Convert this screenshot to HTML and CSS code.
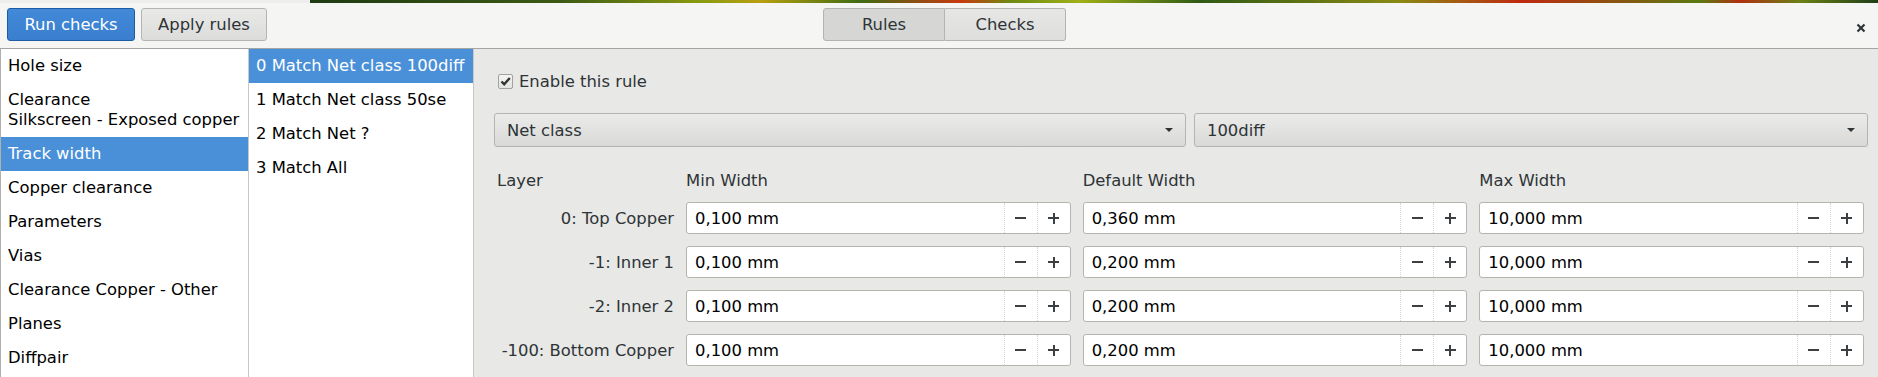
FILE: index.html
```html
<!DOCTYPE html>
<html lang="en">
<head>
    <meta charset="UTF-8">
    <title>Design rules</title>
    <link rel="stylesheet" href="styles.css">
</head>
<body>
    <div class="backdrop"></div>

    <header class="toolbar">
        <div class="toolbar-left">
            <button class="btn btn-primary">Run checks</button>
            <button class="btn btn-apply">Apply rules</button>
        </div>
        <div class="switcher">
            <button class="tab active">Rules</button>
            <button class="tab">Checks</button>
        </div>
        <button class="close" aria-label="Close">
            <svg width="10" height="10" viewBox="0 0 10 10"><path d="M1.5 1.5 L8.5 8.5 M8.5 1.5 L1.5 8.5" stroke="#2e3436" stroke-width="2.2" fill="none"/></svg>
        </button>
    </header>

    <main class="editor">
        <ul class="list categories">
            <li>Hole size</li>
            <li>Clearance<br>Silkscreen - Exposed copper</li>
            <li class="selected">Track width</li>
            <li>Copper clearance</li>
            <li>Parameters</li>
            <li>Vias</li>
            <li>Clearance Copper - Other</li>
            <li>Planes</li>
            <li>Diffpair</li>
        </ul>

        <ul class="list rules">
            <li class="selected">0 Match Net class 100diff</li>
            <li>1 Match Net class 50se</li>
            <li>2 Match Net ?</li>
            <li>3 Match All</li>
        </ul>

        <section class="rule-panel">
            <label class="enable">
                <span class="checkbox">
                    <svg width="13" height="13" viewBox="0 0 13 13"><path d="M2.5 6.5 L5.2 9.3 L10.8 3" stroke="#2e3436" stroke-width="2.4" fill="none"/></svg>
                </span>
                Enable this rule
            </label>

            <div class="match-row">
                <div class="dropdown">
                    <span>Net class</span>
                    <svg class="caret" width="10" height="6" viewBox="0 0 10 6"><path d="M1 1 L9 1 L5 5 Z" fill="#2e3436"/></svg>
                </div>
                <div class="dropdown">
                    <span>100diff</span>
                    <svg class="caret" width="10" height="6" viewBox="0 0 10 6"><path d="M1 1 L9 1 L5 5 Z" fill="#2e3436"/></svg>
                </div>
            </div>

            <div class="width-grid">
                <div class="col-head">Layer</div>
                <div class="col-head">Min Width</div>
                <div class="col-head">Default Width</div>
                <div class="col-head">Max Width</div>

                <div class="layer">0: Top Copper</div>
                <div class="spin"><span class="value">0,100 mm</span><span class="step minus"></span><span class="step plus"></span></div>
                <div class="spin"><span class="value">0,360 mm</span><span class="step minus"></span><span class="step plus"></span></div>
                <div class="spin"><span class="value">10,000 mm</span><span class="step minus"></span><span class="step plus"></span></div>

                <div class="layer">-1: Inner 1</div>
                <div class="spin"><span class="value">0,100 mm</span><span class="step minus"></span><span class="step plus"></span></div>
                <div class="spin"><span class="value">0,200 mm</span><span class="step minus"></span><span class="step plus"></span></div>
                <div class="spin"><span class="value">10,000 mm</span><span class="step minus"></span><span class="step plus"></span></div>

                <div class="layer">-2: Inner 2</div>
                <div class="spin"><span class="value">0,100 mm</span><span class="step minus"></span><span class="step plus"></span></div>
                <div class="spin"><span class="value">0,200 mm</span><span class="step minus"></span><span class="step plus"></span></div>
                <div class="spin"><span class="value">10,000 mm</span><span class="step minus"></span><span class="step plus"></span></div>

                <div class="layer">-100: Bottom Copper</div>
                <div class="spin"><span class="value">0,100 mm</span><span class="step minus"></span><span class="step plus"></span></div>
                <div class="spin"><span class="value">0,200 mm</span><span class="step minus"></span><span class="step plus"></span></div>
                <div class="spin"><span class="value">10,000 mm</span><span class="step minus"></span><span class="step plus"></span></div>
            </div>
        </section>
    </main>
</body>
</html>
```

FILE: styles.css
```css
* {
    margin: 0;
    padding: 0;
    box-sizing: border-box;
}

body {
    width: 1878px;
    height: 377px;
    overflow: hidden;
    font-family: "DejaVu Sans", "Liberation Sans", sans-serif;
    font-size: 16.4px;
    color: #2e3436;
    background: #e8e8e7;
}

/* board peeking out behind the dialog */
.backdrop {
    height: 3px;
    background: linear-gradient(90deg,
        #eeeeee 0, #eeeeee 310px,
        #1d3a12 310px, #3c5a14 560px,
        #8a9a10 700px, #b8a010 760px, #3f6b12 860px,
        #c83a10 960px, #6e8a10 1010px, #a0b018 1080px,
        #2f5a14 1200px, #8a8a12 1400px, #c02a10 1520px,
        #5a7a10 1700px, #b03010 1740px, #6a8214 1800px, #1e3e18 1878px);
}

/* 顶部工具栏 */
.toolbar {
    height: 46px;
    padding: 5px 7px 0;
    display: flex;
    align-items: flex-start;
    position: relative;
    background: #f5f5f4;
    border-bottom: 1px solid #a4a4a2;
}

.toolbar-left {
    display: flex;
    gap: 6px;
}

.btn {
    height: 33px;
    padding: 0;
    font-family: inherit;
    font-size: 16.4px;
    color: #2e3436;
    border: 1px solid #b4b4b1;
    border-radius: 3px;
    background: linear-gradient(#e9e9e8, #dcdcdb);
}

.btn-primary {
    width: 128px;
    color: #ffffff;
    border-color: #1c5ca6;
    background: linear-gradient(#4289d8, #3a7fcf);
}

.btn-apply {
    width: 126px;
}

.switcher {
    position: absolute;
    left: 823px;
    top: 5px;
    display: flex;
}

.tab {
    width: 122px;
    height: 33px;
    font-family: inherit;
    font-size: 16.4px;
    color: #2e3436;
    border: 1px solid #b4b4b1;
    background: linear-gradient(#e6e6e5, #dededd);
}

.tab:first-child {
    border-radius: 3px 0 0 3px;
}

.tab:last-child {
    width: 121px;
    border-left: none;
    border-radius: 0 3px 3px 0;
}

.tab.active {
    background: #d6d6d5;
}

.close {
    margin-left: auto;
    margin-top: 14px;
    margin-right: 4px;
    width: 12px;
    height: 12px;
    border: none;
    background: none;
    display: flex;
    align-items: center;
    justify-content: center;
}

/* 主体 */
.editor {
    height: 328px;
    display: flex;
}

.list {
    list-style: none;
    background: #ffffff;
    color: #000000;
}

.list li {
    padding: 7px 8px;
    line-height: 20px;
    white-space: nowrap;
}

.list li.selected {
    background: #4a90d9;
    color: #ffffff;
}

.categories {
    width: 249px;
    border-left: 1px solid #b0b0ae;
    border-right: 1px solid #c8c8c6;
}

.categories li {
    padding-left: 7px;
}

.rules {
    width: 225px;
    border-right: 1px solid #c8c8c6;
}

.rules li {
    padding-left: 7px;
}

.rule-panel {
    flex: 1;
    padding: 20px 10px 0 20px;
}

.enable {
    display: flex;
    align-items: center;
    gap: 6px;
    height: 24px;
    padding-left: 4px;
}

.checkbox {
    width: 15px;
    height: 15px;
    border: 1px solid #a2a2a0;
    border-radius: 2px;
    background: linear-gradient(#f4f4f3, #e2e2e1);
    display: flex;
    align-items: center;
    justify-content: center;
}

.match-row {
    margin-top: 20px;
    display: grid;
    grid-template-columns: 692px 1fr;
    gap: 8px;
}

.dropdown {
    height: 34px;
    padding: 0 11px 0 12px;
    display: flex;
    align-items: center;
    justify-content: space-between;
    border: 1px solid #b4b4b1;
    border-radius: 3px;
    background: linear-gradient(#ebebea, #d9d9d8);
}

.width-grid {
    margin-top: 24px;
    margin-right: 4px;
    display: grid;
    grid-template-columns: 180px repeat(3, 1fr);
    grid-template-rows: 19px;
    grid-auto-rows: 32px;
    column-gap: 12px;
    row-gap: 12px;
}

.col-head {
    line-height: 19px;
    padding-left: 3px;
}

.col-head:not(:first-child) {
    padding-left: 0;
}

.layer {
    display: flex;
    align-items: center;
    justify-content: flex-end;
}

.spin {
    display: flex;
    background: #ffffff;
    border: 1px solid #b4b4b1;
    border-radius: 3px;
    color: #000000;
}

.spin .value {
    flex: 1;
    padding-left: 8px;
    display: flex;
    align-items: center;
}

.step {
    width: 33px;
    border-left: 1px dotted #d6d6d4;
    position: relative;
}

.step::before,
.step::after {
    content: '';
    position: absolute;
    left: 50%;
    top: 50%;
    background: #3c4043;
}

.step::before {
    width: 11px;
    height: 2px;
    margin: -1px 0 0 -5.5px;
}

.plus::after {
    width: 2px;
    height: 11px;
    margin: -5.5px 0 0 -1px;
}
```
